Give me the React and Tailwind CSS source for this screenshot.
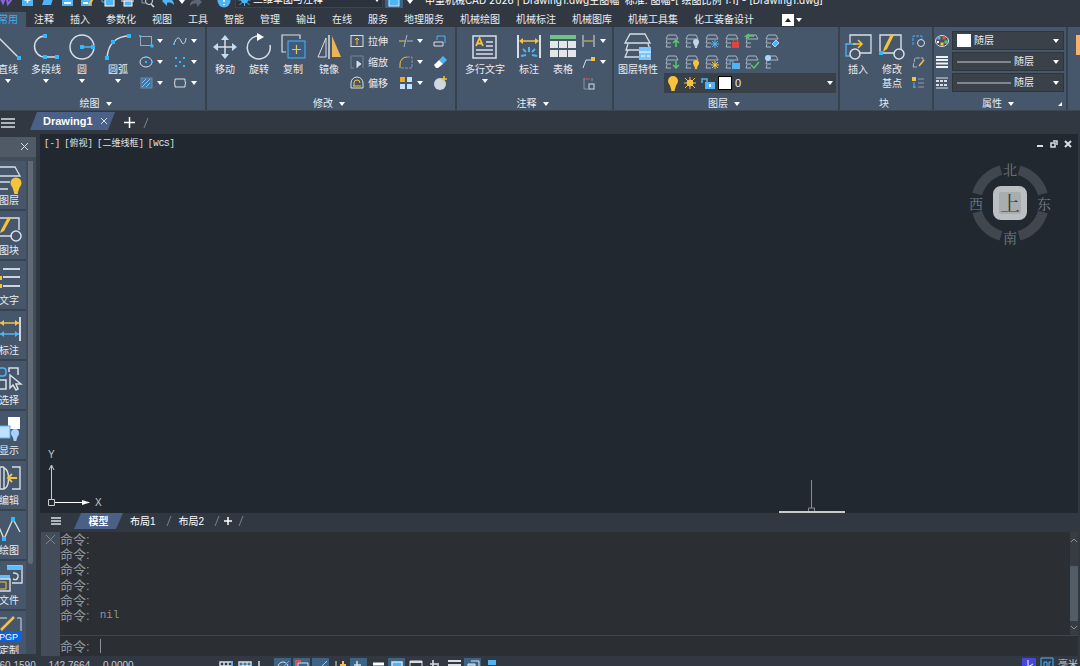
import React from "react";
import clsx from "clsx";

const W = "#d9dee6";
const B = "#4fb3f6";
const Y = "#f7c23c";

const Svg = ({ w = 28, h = w, box, children, className }) => (
  <svg
    width={w}
    height={h}
    viewBox={box || `0 0 ${w} ${h}`}
    fill="none"
    stroke={W}
    className={clsx("shrink-0", className)}
    aria-hidden="true"
  >
    {children}
  </svg>
);

const Caret = ({ className }) => (
  <Svg w={6} h={4} className={className}>
    <path d="M0 0h6L3 4z" fill="#fff" stroke="none" />
  </Svg>
);

const Dot = ({ x, y, s = 4, c = "#2fb9ff" }) => (
  <rect x={x - s / 2} y={y - s / 2} width={s} height={s} fill={c} stroke="none" />
);

const Sun = ({ x, y, r = 3, c = Y }) => (
  <g stroke={c}>
    <circle cx={x} cy={y} r={r - 1} fill={c} />
    <path
      d={`M${x} ${y - r - 2}v${2 * r + 4}M${x - r - 2} ${y}h${2 * r + 4}M${x - r - 1} ${y - r - 1}l${2 * r + 2} ${2 * r + 2}M${x + r + 1} ${y - r - 1}l${-2 * r - 2} ${2 * r + 2}`}
    />
  </g>
);

const Bulb = ({ x, y, r = 4, c = Y }) => (
  <g fill={c} stroke="none">
    <circle cx={x} cy={y} r={r} />
    <path d={`M${x - r * 0.7} ${y + r * 0.6}h${r * 1.4}l${-r * 0.3} ${r}h${-r * 0.8}z`} />
    <rect x={x - r * 0.35} y={y + r * 1.5} width={r * 0.7} height={r * 0.5} />
  </g>
);

const BigTool = ({ icon, label, width, arrow }) => (
  <button className={clsx("flex shrink-0 flex-col items-center pt-0.5", width)}>
    <Svg>{icon}</Svg>
    <span className="whitespace-pre py-0.5 text-center leading-[14px]">{label}</span>
    {arrow && <Caret />}
  </button>
);

const SmallTool = ({ icon, label, arrow }) => (
  <div className="flex h-5 items-center">
    <button className="flex items-center gap-[3px]" aria-label={label || "工具"}>
      <Svg w={16}>{icon}</Svg>
      {label && <span>{label}</span>}
    </button>
    {arrow && (
      <button className="flex w-3 justify-center" aria-label="更多">
        <Caret />
      </button>
    )}
  </div>
);

const Column = ({ tools, className }) => (
  <div className={clsx("flex shrink-0 flex-col gap-px", className)}>
    {tools.map((t, i) => (
      <SmallTool key={i} {...t} />
    ))}
  </div>
);

const Panel = ({ title, arrow = true, children, className, launcher }) => (
  <section
    className={clsx(
      "flex shrink-0 flex-col border-r-2 border-[#38424f] pt-1",
      className
    )}
  >
    <div className="flex h-[63px]">{children}</div>
    <div className="flex h-[17px] items-center pt-1">
      <span className="flex-1" />
      <button className="flex items-center gap-1.5 leading-3">
        {title}
        {arrow && <Caret />}
      </button>
      <span className="flex flex-1 justify-end pr-1">
        {launcher && (
          <Svg w={4}>
            <path d="M4 0v4H0z" fill="#fff" stroke="none" />
          </Svg>
        )}
      </span>
    </div>
  </section>
);

const icons = {
  line: (
    <>
      <path d="M3 3l22 22" strokeWidth="1.5" />
      <Dot x={25} y={25} />
    </>
  ),
  polyline: (
    <>
      <path d="M13 3A10 10 0 0 0 13 24H25" strokeWidth="1.5" />
      <Dot x={13} y={3} />
      <Dot x={13} y={24} />
      <Dot x={25} y={24} />
    </>
  ),
  circle: (
    <>
      <circle cx="14" cy="14" r="12" strokeWidth="1.5" />
      <path d="M14 14h11" stroke={B} strokeWidth="1.5" />
      <Dot x={14} y={14} />
      <Dot x={25} y={14} />
    </>
  ),
  arc: (
    <>
      <path d="M3 25C4 11 12 3 26 3" strokeWidth="1.5" />
      <Dot x={3} y={25} />
      <Dot x={9} y={9} />
      <Dot x={25} y={3} />
    </>
  ),
  move: (
    <>
      <path d="M14 5v18M5 14h18" strokeWidth="1.5" />
      <path
        d="M14 2l4 5h-8zM14 26l4-5h-8zM2 14l5-4v8zM26 14l-5-4v8z"
        fill="#c5dcf5"
        stroke="none"
      />
    </>
  ),
  rotate: (
    <>
      <path d="M13 3A11.500 11.500 0 1 0 25 12" strokeWidth="1.5" />
      <path d="M12 0l7 4-7 4z" fill="#fff" stroke="none" />
    </>
  ),
  copy: (
    <>
      <path d="M21 6V2H3v17h4" strokeWidth="1.2" />
      <rect x="9" y="8" width="17" height="17" fill="#3c5d80" stroke={B} />
      <path d="M17.500 12v9M13 16.500h9" stroke={Y} strokeWidth="1.2" />
    </>
  ),
  mirror: (
    <>
      <path d="M11 5v19H3z" />
      <path d="M14 2v24" strokeWidth="1.5" />
      <path d="M17 3v21h9z" fill="#e9b552" stroke="none" />
    </>
  ),
  mtext: (
    <>
      <rect x="2" y="3" width="23" height="22" strokeWidth="1.5" />
      <path d="M5 13L8.500 5 12 13M6.500 10.500h4" stroke={Y} strokeWidth="1.8" />
      <path d="M15 9h7M15 13h7M5 17h17M5 21h17" strokeWidth="1.4" />
    </>
  ),
  dim: (
    <>
      <path d="M3 2v23M25 2v23" strokeWidth="2" />
      <path d="M6 8h16" stroke={Y} strokeWidth="1.5" />
      <path d="M4 8l4-3v6zM24 8l-4-3v6z" fill={Y} stroke="none" />
      <path
        d="M14 14v5M8 16l3 3M20 16l-3 3M6 23l5-1M22 23l-5-1"
        stroke={B}
        strokeWidth="2"
      />
    </>
  ),
  table: (
    <>
      <rect x="1" y="2" width="26" height="4" fill="#73c283" stroke="none" />
      {[1, 10, 19].map((x) =>
        [8, 17].map((y) => (
          <rect key={x + "-" + y} x={x} y={y} width="8" height="7" fill="#e4e6e8" stroke="none" />
        ))
      )}
    </>
  ),
  layerProps: (
    <>
      <path
        d="M6 1h15l5 9H1zM4 11l-2 6h13M4 17l-3 7h14M24 11l2 5"
        strokeWidth="1.3"
      />
      <rect x="15" y="14" width="12" height="13" fill="#7cc4ff" stroke="none" />
      <path d="M15 19h12M17 23h4M23 23h3" stroke="#fff" />
    </>
  ),
  insert: (
    <>
      <path d="M6 10V2h21v18H15" strokeWidth="1.3" />
      <path d="M12 11H2v12h4" stroke={B} strokeWidth="1.3" />
      <circle cx="11" cy="21" r="5" strokeWidth="1.5" />
      <path d="M9 11h8M14 7l4 4-4 4" stroke={Y} strokeWidth="1.6" />
    </>
  ),
  editBlock: (
    <>
      <path d="M2 19V2h21v14M3 20h13" strokeWidth="1.4" />
      <path d="M6 15L13 1l3 1-7 14-4 3z" fill={Y} stroke="none" />
      <circle cx="21" cy="21" r="5" strokeWidth="1.5" />
      <Dot x={3} y={20} />
    </>
  ),
};

const drawTools = [
  {
    icon: (
      <>
        <rect x="2.500" y="3.500" width="11" height="9" stroke="#9aa8ba" />
        <Dot x={2} y={3} s={2} />
        <Dot x={14} y={13} s={3} />
      </>
    ),
    arrow: true,
  },
  {
    icon: (
      <>
        <ellipse cx="8" cy="8" rx="6" ry="5" />
        <Dot x={8} y={8} s={2} />
        <Dot x={14} y={8} s={2} />
        <Dot x={8} y={3} s={2} />
      </>
    ),
    arrow: true,
  },
  {
    icon: (
      <>
        <rect x="3" y="3" width="11" height="10" fill="#3d78aa" stroke="#6f8aa5" />
        <path d="M4 8l4-4M4 12L12 4M8 12l4-4" stroke="#86c3f2" />
      </>
    ),
    arrow: true,
  },
];

const curveTools = [
  {
    icon: (
      <>
        <path d="M2 11C5 2 8 5 9 8s4 5 5-3" />
        <Dot x={2} y={11} s={2} />
      </>
    ),
    arrow: true,
  },
  {
    icon: (
      <>
        <Dot x={4} y={4} s={2} />
        <Dot x={12} y={4} s={2} />
        <Dot x={8} y={8} s={2} />
        <Dot x={4} y={12} s={2} />
        <Dot x={12} y={12} s={2} />
      </>
    ),
    arrow: true,
  },
  {
    icon: <path d="M3 4h10v2q1 2 0 4v2H3v-2q-1-2 0-4z" />,
    arrow: true,
  },
];

const modifyTools = [
  {
    label: "拉伸",
    icon: (
      <>
        <rect x="2" y="2.500" width="12" height="11" />
        <path d="M8 12V5M6 7l2-2 2 2" stroke={Y} />
      </>
    ),
  },
  {
    label: "缩放",
    icon: (
      <>
        <path d="M2 2h12v12M2 2v12h3" stroke="#77869a" />
        <path d="M8 7l4 3-4 3zM8 13v1" fill={W} />
      </>
    ),
  },
  {
    label: "偏移",
    icon: (
      <>
        <path d="M2 13V8a6 6 0 0 1 12 0v5z" />
        <path d="M5 11V8a3 3 0 0 1 6 0M4 11h8" stroke={Y} />
      </>
    ),
  },
];

const trimTools = [
  {
    icon: (
      <>
        <path d="M6 14L9 2M9 8h6" stroke="#aab6c5" />
        <path d="M1 8h6" stroke={Y} />
      </>
    ),
    arrow: true,
  },
  {
    icon: (
      <>
        <path d="M2 14V10a7 7 0 0 1 7-7" stroke={Y} />
        <path d="M9 3h5v11H3" stroke="#8795a8" strokeDasharray="3 1" />
      </>
    ),
    arrow: true,
  },
  {
    icon: (
      <g stroke="none">
        <rect x="2" y="2" width="5" height="5" fill="#f5a623" />
        <rect x="9" y="2" width="5" height="5" fill="#bfe0ff" />
        <rect x="2" y="9" width="5" height="5" fill="#bfe0ff" />
        <rect x="9" y="9" width="5" height="5" fill="#bfe0ff" />
      </g>
    ),
    arrow: true,
  },
];

const eraseTools = [
  {
    icon: (
      <>
        <path d="M5 7V3h8v7" stroke={B} />
        <path d="M2 9h9v4H2z" />
      </>
    ),
  },
  {
    icon: (
      <g stroke="none">
        <path d="M7 6l4-4 4 4-4 4z" fill={B} />
        <path d="M2 11l5-5 4 4-5 4H4z" fill="#fff" />
      </g>
    ),
  },
  {
    icon: (
      <>
        <circle cx="8" cy="9" r="6" fill="#cfd7e2" stroke="none" />
        <path d="M12 1v6M9 4h6" stroke={Y} strokeWidth="1.5" />
      </>
    ),
  },
];

const noteTools = [
  {
    icon: (
      <>
        <path d="M2 2v12M13 2v12" />
        <path d="M3 8h9" stroke={Y} />
      </>
    ),
    arrow: true,
  },
  {
    icon: (
      <>
        <path d="M2 14l3-8h5" />
        <Dot x={12} y={5} s={4} c={Y} />
      </>
    ),
    arrow: true,
  },
  {
    icon: (
      <>
        <path d="M3 3v11h4M11 3v3" stroke="#8795a8" />
        <path d="M3 4h6" stroke="#e0524c" />
        <rect x="8" y="9" width="5" height="5" />
      </>
    ),
  },
];

const stack = (
  <path d="M2 6l2-4h8l2 4zM3 7l-1 3h5M3 11l-1 3h5" stroke="#a9b5c5" />
);

const layerTools = [
  <path d="M12 14V8M9 10l3-3 3 3" stroke="#53cf62" strokeWidth="1.5" />,
  <Bulb x={12} y={9} r={3} c="#c5d3ea" />,
  <Sun x={11} y={11} r={2} c={B} />,
  <>
    <rect x="8" y="9" width="7" height="6" fill="#e0443e" stroke="none" />
    <path d="M9.500 9V7h4v2" stroke="#e0443e" />
  </>,
  <path d="M10 3H2l3-2M2 3l3 2" stroke="#53cf62" strokeWidth="1.5" />,
  <path d="M8 11l4-4 3 3-4 4z" fill={B} stroke="#a9d6fb" />,
  <path d="M12 7v6M9 11l3 3 3-3" stroke="#53cf62" strokeWidth="1.5" />,
  <Bulb x={12} y={9} r={3} />,
  <Sun x={11} y={11} r={2} />,
  <>
    <rect x="8" y="9" width="8" height="6" fill={B} stroke="none" />
    <path d="M6 9V7h3v2" stroke={B} />
  </>,
  <path d="M7 11l3 3 5-6" stroke="#53cf62" strokeWidth="1.5" />,
  <circle cx="4" cy="4" r="3" fill="#a9d6fb" stroke="none" />,
];

const blockTools = [
  {
    icon: (
      <>
        <path d="M3 12V3h9v3" strokeDasharray="3 1" stroke={B} />
        <circle cx="11" cy="10" r="3.500" />
      </>
    ),
  },
  {
    icon: (
      <>
        <path d="M3 13l2-9h8v3M3 13h5" stroke="#aab6c5" strokeDasharray="4 1" />
        <path d="M9 12l5-6" stroke={Y} strokeWidth="1.5" />
      </>
    ),
  },
  {
    icon: (
      <>
        <Dot x={4} y={4} s={4} c={Y} />
        <path d="M8 4h6M8 8h6M8 12h6" stroke="#8d9bad" />
        <path d="M4 7v6M3 12h3" stroke={B} />
      </>
    ),
  },
];

const propIcons = [
  <>
    <ellipse cx="8" cy="8" rx="6.500" ry="5.500" fill="#4a5058" />
    <Dot x={5} y={5} s={3} c="#4fb3f6" />
    <Dot x={10} y={5} s={3} c="#e0524c" />
    <Dot x={12} y={9} s={3} c="#53cf62" />
    <Dot x={8} y={11} s={3} c={Y} />
    <Dot x={4} y={9} s={2} c="#fff" />
  </>,
  <path d="M2 3h12M2 6h12M2 9.500h12M2 13h12" stroke="#eef1f5" strokeWidth="2.2" />,
  <>
    <path d="M2 3h12M2 13h12" />
    <path d="M2 6h12M2 10h12" strokeDasharray="3 1" strokeWidth="2" />
  </>,
];

const PropSelect = ({ label, swatch }) => (
  <div className="flex h-[19px] flex-1 items-center border border-[#2f353d] bg-[#3a4149] pr-1 pl-1">
    {swatch ? (
      <span className="h-[13px] w-[14px] bg-white" />
    ) : (
      <span className="h-0.5 w-[54px] bg-[#7f868d]" />
    )}
    <select aria-label={label} className="min-w-0 flex-1 appearance-none bg-transparent pl-[3px] outline-none">
      <option>随层</option>
    </select>
    <Caret />
  </div>
);

const menuTabs = [
  "常用",
  "注释",
  "插入",
  "参数化",
  "视图",
  "工具",
  "智能",
  "管理",
  "输出",
  "在线",
  "服务",
  "地理服务",
  "机械绘图",
  "机械标注",
  "机械图库",
  "机械工具集",
  "化工装备设计",
];

const quickIcons = [
  <>
    <rect x="2" y="1" width="11" height="12" fill={B} stroke="none" />
    <path d="M7.500 4v6M4.500 7h6" stroke="#fff" strokeWidth="1.5" />
  </>,
  <path d="M6 0h9l-4 12H2z" fill={B} stroke="none" />,
  <>
    <rect x="2" y="1" width="11" height="12" fill={B} stroke="none" />
    <path d="M4 10h7" stroke="#fff" strokeWidth="2" />
  </>,
  <>
    <rect x="1" y="1" width="11" height="12" fill={B} stroke="none" />
    <path d="M3 10h5" stroke="#fff" strokeWidth="2" />
    <path d="M9 12l5-8" stroke={Y} strokeWidth="2" />
  </>,
  <>
    <path d="M2 1v8h4" stroke={B} />
    <rect x="5" y="4" width="9" height="9" fill={B} stroke="#fff" />
  </>,
  <>
    <rect x="1" y="3" width="13" height="6" fill="#8b98a8" stroke="none" />
    <rect x="4" y="8" width="8" height="5" fill={B} stroke="#fff" />
  </>,
  <>
    <path d="M2 2v8h4" stroke="#8b98a8" />
    <circle cx="9" cy="8" r="3.500" />
    <path d="M11 11l3 3" strokeWidth="1.5" />
  </>,
  <path d="M2 8l5-5v3c5 0 7 2 7 6-2-2-4-3-7-2v3z" fill={B} stroke="none" />,
];

const TitleBar = () => (
  <header className="flex h-3 shrink-0 items-end overflow-hidden pb-1 leading-4 text-white">
    <Svg w={16} className="mr-1 -ml-1">
      <path d="M3 3l4 8 3-8 2 9 4-5" stroke="#8a63e0" strokeWidth="2" />
    </Svg>
    <div className="flex gap-[5px] pl-1">
      {quickIcons.map((icon, i) => (
        <button key={i} aria-label="快速访问">
          <Svg w={15}>{icon}</Svg>
        </button>
      ))}
    </div>
    <Caret className="mx-1 mb-1" />
    <Svg w={14} className="mr-3.5">
      <path d="M13 8L8 3v3C3 6 1 8 1 12c2-2 4-3 7-2v3z" fill="#5d6773" stroke="none" />
    </Svg>
    <Svg w={14} className="mr-1">
      <circle cx="7" cy="7" r="6.500" fill={B} stroke="none" />
      <path d="M7 4v4M7 10v1" stroke="#fff" strokeWidth="1.5" />
    </Svg>
    <div className="flex h-4 w-[148px] items-center border border-[#3d4550] bg-[#2c323b] px-0.5">
      <Svg w={13} className="mr-0.5">
        <Sun x={6.5} y={6} r={4} c={B} />
      </Svg>
      <select aria-label="工作空间" className="flex-1 appearance-none bg-transparent outline-none">
        <option>二维草图与注释</option>
      </select>
      <Caret />
    </div>
    <button className="ml-0.5 bg-[#3a6485] px-0.5" aria-label="云">
      <Svg w={14}>
        <rect x="2" y="4" width="10" height="8" fill={B} stroke="#cfe8ff" />
      </Svg>
    </button>
    <Caret className="mr-3 mb-1 ml-1" />
    <h1 className="whitespace-pre font-['Inter','Noto_Sans_CJK_SC',sans-serif]">
      中望机械CAD 2026 | Drawing1.dwg主图幅  标准: 图幅-[ 绘图比例 1:1] - [Drawing1.dwg]
    </h1>
  </header>
);

const Ribbon = () => (
  <div className="flex h-21 shrink-0 overflow-hidden border-b border-[#3b4755] bg-[#46566b]">
    <Panel title="绘图" className="-ml-2.5 w-[217px]">
      <BigTool icon={icons.line} label="直线" width="w-9" arrow />
      <BigTool icon={icons.polyline} label="多段线" width="w-10" arrow />
      <BigTool icon={icons.circle} label="圆" width="w-8" arrow />
      <BigTool icon={icons.arc} label="圆弧" width="w-10" arrow />
      <Column tools={drawTools} />
      <Column tools={curveTools} className="ml-1.5" />
    </Panel>
    <Panel title="修改" className="w-[250px]">
      <BigTool icon={icons.move} label="移动" width="w-9" />
      <BigTool icon={icons.rotate} label="旋转" width="w-8" />
      <BigTool icon={icons.copy} label="复制" width="w-9" />
      <BigTool icon={icons.mirror} label="镜像" width="w-9" />
      <Column tools={modifyTools} className="ml-0.5" />
      <Column tools={trimTools} className="ml-2.5" />
      <Column tools={eraseTools} className="ml-1.5" />
    </Panel>
    <Panel title="注释" className="w-[157px]">
      <BigTool icon={icons.mtext} label="多行文字" width="w-14" arrow />
      <BigTool icon={icons.dim} label="标注" width="w-8" />
      <BigTool icon={icons.table} label="表格" width="w-9" />
      <Column tools={noteTools} />
    </Panel>
    <Panel title="图层" className="w-[226px]">
      <BigTool icon={icons.layerProps} label="图层特性" width="w-12" />
      <div className="flex flex-1 flex-col gap-px pr-0.5 pl-0.5">
        <div className="grid w-30 grid-cols-6 gap-y-px">
          {layerTools.map((icon, i) => (
            <button key={i} className="flex h-5 items-center" aria-label="图层工具">
              <Svg w={16}>
                {stack}
                {icon}
              </Svg>
            </button>
          ))}
        </div>
        <div className="flex h-5 items-center gap-1 bg-[#394047] px-[3px] text-[11px]">
          <Svg w={12} h={16}>
            <Bulb x={6} y={6} r={5} />
          </Svg>
          <Svg w={14}>
            <Sun x={7} y={7} r={4} />
          </Svg>
          <Svg w={14} h={16}>
            <rect x="4" y="7" width="10" height="7" fill={B} stroke="none" />
            <path d="M1 8V4h5v4" stroke={B} strokeWidth="1.5" />
            <path d="M9 9v3" stroke="#fff" strokeWidth="2" />
          </Svg>
          <span className="h-3 w-3 bg-white outline outline-black" />
          <select aria-label="当前图层" className="min-w-0 flex-1 appearance-none bg-transparent outline-none">
            <option>0</option>
          </select>
          <Caret />
        </div>
      </div>
    </Panel>
    <Panel title="块" arrow={false} className="w-[94px]">
      <BigTool icon={icons.insert} label="插入" width="w-9" />
      <BigTool icon={icons.editBlock} label={"修改\n基点"} width="w-8" />
      <Column tools={blockTools} className="ml-0.5" />
    </Panel>
    <Panel title="属性" className="w-[134px]" launcher>
      <div className="flex flex-1 flex-col gap-0.5 pr-0.5">
        {propIcons.map((icon, i) => (
          <div key={i} className="flex items-center gap-0.5">
            <Svg w={16}>{icon}</Svg>
            <PropSelect label={["颜色", "线宽", "线型"][i]} swatch={i === 0} />
          </div>
        ))}
      </div>
    </Panel>
    <div className="flex flex-1 overflow-hidden pt-1 pl-1.5">
      <BigTool
        icon={<rect x="0" y="2" width="20" height="20" fill="#f5b26b" stroke="none" />}
        label="粘贴"
        width="w-8"
      />
    </div>
  </div>
);

const paletteItems = [
  {
    label: "图层",
    icon: (
      <>
        <path d="M4 3h16l5 9H2M2 18h13M2 25h11" strokeWidth="1.3" />
        <Bulb x={21} y={19} r={5.5} />
      </>
    ),
  },
  {
    label: "图块",
    icon: (
      <>
        <path d="M4 22V4h20v12M4 22h13" strokeWidth="1.4" />
        <path d="M6 16l7-13 3 1-7 13-4 2z" fill={Y} stroke="none" />
        <circle cx="21" cy="22" r="5" strokeWidth="1.5" />
      </>
    ),
  },
  {
    label: "文字",
    icon: (
      <>
        <path d="M8 5h17M8 13h17M8 22h17" stroke="#fff" strokeWidth="1.5" />
        <Dot x={5} y={14} c={Y} />
        <Dot x={5} y={22} c={Y} />
      </>
    ),
  },
  {
    label: "标注",
    icon: (
      <>
        <path d="M25 3v24" stroke="#fff" strokeWidth="1.5" />
        <path d="M4 9h20" stroke={Y} strokeWidth="1.5" />
        <path d="M24 9l-4-3v6zM5 9l4-3v6z" fill={Y} stroke="none" />
        <path d="M4 20h20" stroke={B} strokeWidth="1.5" />
        <path d="M24 20l-4-3v6zM5 20l4-3v6z" fill={B} stroke="none" />
      </>
    ),
  },
  {
    label: "选择",
    icon: (
      <>
        <rect x="3" y="4" width="8" height="8" rx="3" stroke={B} strokeWidth="1.5" />
        <path d="M14 8V4h9v7M3 16h8v9H3z" strokeWidth="1.5" />
        <path d="M15 11v13l3-3 3 5 2-1-2-5h5z" strokeWidth="1.5" />
      </>
    ),
  },
  {
    label: "显示",
    icon: (
      <>
        <rect x="13" y="3" width="12" height="12" fill="#fff" stroke="none" />
        <rect x="1" y="12" width="14" height="12" fill="#bfe0ff" stroke={B} />
        <Bulb x={20} y={19} r={4} c="#a9d0fb" />
      </>
    ),
  },
  {
    label: "编辑",
    icon: (
      <>
        <path d="M9 3v22M9 3H5v22h4M9 4c6 2 6 19 0 21M17 3h8v22h-8" strokeWidth="1.4" />
        <path d="M13 14h9M17 10l-4 4 4 4" stroke={Y} strokeWidth="1.8" />
      </>
    ),
  },
  {
    label: "绘图",
    icon: (
      <>
        <path d="M2 8l7 17 9-20 7 13" strokeWidth="1.4" />
        <Dot x={9} y={25} />
        <Dot x={18} y={5} />
      </>
    ),
  },
  {
    label: "文件",
    icon: (
      <>
        <path d="M12 2h15v17H17M18 9q6 0 5 4t-5 2" strokeWidth="1.4" />
        <path d="M12 4h15M2 13h13" stroke="#5cbcff" strokeWidth="4" />
        <path d="M2 15h13v12H2" strokeWidth="1.4" />
        <path d="M2 18h9v7H2" stroke={Y} />
      </>
    ),
  },
  {
    label: "定制",
    icon: (
      <>
        <path d="M4 4h8M22 4h4v13" />
        <path d="M6 16L19 3" stroke={Y} strokeWidth="2.5" />
        <rect x="-1" y="18" width="28" height="9" fill="#0b62e0" stroke="none" />
        <text x="4" y="26" fontSize="9" fill="#fff" stroke="none">
          PGP
        </text>
      </>
    ),
  },
];

const Palette = () => (
  <aside className="flex w-9 shrink-0 flex-col pt-[3px] pb-0.5">
    <div className="flex h-5 shrink-0 items-center justify-end bg-[#4f5a66] pr-1.5">
      <button aria-label="关闭面板">
        <Svg w={10}>
          <path d="M1 1l7 7M8 1L1 8" />
        </Svg>
      </button>
    </div>
    <div className="flex min-h-0 flex-1 bg-[#414c58] pt-1">
      <div className="-ml-2 flex w-[34px] flex-col overflow-hidden">
        {paletteItems.map((item) => (
          <button
            key={item.label}
            className="flex h-[50px] shrink-0 flex-col items-center border-b-2 border-[#39434f] bg-[#46566b] pt-[3px]"
          >
            <Svg w={28} h={30}>
              {item.icon}
            </Svg>
            <span className="leading-[14px]">{item.label}</span>
          </button>
        ))}
      </div>
      <div className="flex flex-1 pl-0.5">
        <div className="h-[403px] w-[5px] rounded-b bg-[#5f6a74]" />
      </div>
    </div>
  </aside>
);

const Compass = () => (
  <div className="absolute top-7 right-[27px] grid h-[82px] w-[82px] grid-cols-3 grid-rows-3 place-items-center font-['Noto_Serif_CJK_SC','Noto_Sans_CJK_SC',serif] text-sm leading-none text-[#747c86]">
    <svg viewBox="0 0 82 82" className="col-span-3 col-start-1 row-span-3 row-start-1 h-full w-full" fill="none">
      <path
        d="M50 8.200A34 34 0 0 1 73.800 32M73.800 50A34 34 0 0 1 50 73.800M32 73.800A34 34 0 0 1 8.200 50M8.200 32A34 34 0 0 1 32 8.200"
        stroke="#40474f"
        strokeWidth="10"
      />
    </svg>
    <span className="col-start-2 row-start-1 self-start">北</span>
    <span className="col-start-1 row-start-2 justify-self-start">西</span>
    <button className="col-start-2 row-start-2 h-[34px] w-[34px] rounded-lg border-6 border-[#bcbfc1] bg-[#aaadaf] text-xl leading-none text-[#33383d]">
      上
    </button>
    <span className="col-start-3 row-start-2 justify-self-end">东</span>
    <span className="col-start-2 row-start-3 self-end">南</span>
  </div>
);

const Canvas = () => (
  <div className="relative min-h-0 flex-1 overflow-hidden bg-[#212830]">
    <div className="flex items-center justify-between pt-0.5 pr-1.5 pl-1 text-[9px] leading-4">
      <div className="flex gap-1 font-['Liberation_Mono','Noto_Sans_CJK_SC',monospace] text-[#e1e4e6]">
        <button>[-]</button>
        <button>[俯视]</button>
        <button>[二维线框]</button>
        <button>[WCS]</button>
      </div>
      <div className="flex gap-1.5">
        <button aria-label="最小化">
          <Svg w={8}>
            <path d="M1 6h6" strokeWidth="2" />
          </Svg>
        </button>
        <button aria-label="还原">
          <Svg w={8}>
            <path d="M1 3h4v4H1zM3 1h4v4" strokeWidth="1.5" />
          </Svg>
        </button>
        <button aria-label="关闭">
          <Svg w={8}>
            <path d="M1 1l6 6M7 1L1 7" strokeWidth="2" />
          </Svg>
        </button>
      </div>
    </div>
    <Compass />
    <Svg w={60} h={64} className="absolute bottom-0 left-1.5">
      <path d="M2.500 50.500h6v6h-6zM5.500 50V17M3 21l2.500-5 2.500 5" stroke="#c7cacd" />
      <path d="M9 53.500h34" stroke="#fff" />
      <path d="M36 51l8 2.500-8 2.500z" fill="#fff" stroke="none" />
      <text x="2" y="9" fontSize="10" fill="#c7cacd" stroke="none">
        Y
      </text>
      <text x="49" y="57" fontSize="10" fill="#c7cacd" stroke="none">
        X
      </text>
    </Svg>
    <Svg w={66} h={34} className="absolute right-[233px] bottom-0">
      <path d="M32.500 1v28M29.500 34v-5h6v5" stroke="#888d92" />
      <path d="M0 33h66" stroke="#c9ccc6" strokeWidth="2" />
    </Svg>
  </div>
);

const Slash = ({ className }) => (
  <Svg w={6} h={12} className={className}>
    <path d="M5 1L1 11" stroke="#7b838e" />
  </Svg>
);

const LayoutTabs = () => (
  <nav className="flex h-[19px] shrink-0 items-center pb-[3px] text-white">
    <button className="mr-3 ml-2.5" aria-label="布局列表">
      <Svg w={12} h={10}>
        <path d="M1 2h10M1 5h10M1 8h10" strokeWidth="1.5" />
      </Svg>
    </button>
    <button className="h-4 w-[49px] bg-[#4a6086] font-bold [clip-path:polygon(7px_0,100%_0,42px_100%,0_100%)]">
      模型
    </button>
    <button className="ml-[7px]">布局1</button>
    <Slash className="ml-2.5" />
    <button className="ml-[7px]">布局2</button>
    <Slash className="ml-2.5" />
    <button className="mx-1" aria-label="新建布局">
      <Svg w={8}>
        <path d="M4 0v8M0 4h8" stroke="#fff" strokeWidth="1.5" />
      </Svg>
    </button>
    <Slash className="ml-0.5" />
  </nav>
);

const history = ["", "", "", "", "", "nil"];

const CommandPanel = () => (
  <div className="mr-0.5 ml-px flex h-[124px] shrink-0 bg-[#2b2e32] text-[13px] text-[#8f969e]">
    <div className="w-[19px] shrink-0 bg-[#454c59] pt-0.5 pl-1">
      <button className="block" aria-label="关闭命令行">
        <Svg w={11}>
          <path d="M1 1l9 9M10 1l-9 9" stroke="#7d8591" />
        </Svg>
      </button>
    </div>
    <div className="flex flex-1 flex-col">
      <div className="flex h-[103px]">
        <div className="flex flex-1 flex-col justify-between pb-3 leading-[15px]">
          {history.map((line, i) => (
            <p key={i} className="flex gap-2.5">
              <span>命令:</span>
              <span className="font-['Liberation_Mono',monospace] text-[11px]">{line}</span>
            </p>
          ))}
        </div>
        <div className="flex w-2 flex-col items-center justify-between bg-[#383c42]">
          <Svg w={8} h={14}>
            <path d="M1 10l3-3 3 3" stroke="#8b939c" />
          </Svg>
          <span className="mt-auto h-[55px] w-full bg-[#525c67]" />
          <Svg w={8} h={14}>
            <path d="M1 5l3 3 3-3" stroke="#8b939c" />
          </Svg>
        </div>
      </div>
      <div className="flex flex-1 items-center border-t border-[#41454a] leading-[15px]">
        <label htmlFor="command">命令:</label>
        <input
          id="command"
          className="ml-2.5 h-3.5 flex-1 border-l border-[#8b9097] bg-transparent pl-1 outline-none"
        />
      </div>
    </div>
  </div>
);

const grid = <path d="M1 2h12v12H1zM5 2v12M9 2v12M1 6h12" strokeWidth="1.5" />;

const statusIcons = [
  { icon: <g>{grid}<path d="M13 1v12" stroke={B} strokeWidth="2" /></g> },
  { icon: <g>{grid}<path d="M1 4h12" stroke={B} /></g> },
  { icon: <path d="M2 1v12" strokeWidth="1.5" /> },
  { on: true, icon: <><circle cx="7" cy="7" r="5" /><path d="M7 7l6-6" stroke={B} /></> },
  { on: true, icon: <><path d="M3 3h10v10H3z" /><path d="M1 6V1h5" stroke="#e0524c" strokeWidth="2" /></> },
  { on: true, icon: <path d="M2 6l3 3 8-8" stroke="#9bd0f7" /> },
  { icon: <><path d="M3 1v12" /><path d="M10 1v12M7 5h6" stroke={Y} strokeWidth="2" /></> },
  { on: true, icon: <path d="M5 1v10M2 5h7" strokeWidth="1.5" /> },
  { icon: <path d="M2 4h11" stroke="#fff" strokeWidth="3" /> },
  { on: true, icon: <path d="M2 2h10v8H2z" fill={B} strokeWidth="1.5" /> },
  { icon: <><path d="M1 1h12v12H1z" /><path d="M1 2h12" strokeWidth="2" /></> },
  { icon: <path d="M5 0v8M2 4h7M10 3v8" strokeWidth="1.5" /> },
  { icon: <path d="M1 1h13M1 5h13" strokeWidth="2" /> },
  { on: true, icon: <><path d="M5 1h8v8" /><path d="M2 4h7v7H2z" fill="#9ab8d2" /></> },
  { icon: <path d="M3 0h8v5H3z" fill={B} stroke="none" /> },
];

const StatusBar = () => (
  <footer className="flex h-2.5 shrink-0 items-start overflow-hidden text-[#c5cad1]">
    <div className="flex w-[217px] shrink-0 gap-2.5 pt-1 leading-3">
      <span className="-ml-1.5">360.1590,</span>
      <span>142.7664,</span>
      <span>0.0000</span>
    </div>
    <div className="flex flex-1 gap-0.5 pt-0.5">
      {statusIcons.map(({ icon, on }, i) => (
        <button
          key={i}
          aria-label="状态开关"
          className={clsx("flex w-[17px] justify-center pt-0.5", on && "bg-[#3d6485]")}
        >
          <Svg w={14}>{icon}</Svg>
        </button>
      ))}
    </div>
    <div className="flex shrink-0 items-start gap-1 pr-0.5">
      <Svg w={14}>
        <rect width="14" height="14" y="2" fill="#4747dc" stroke="none" />
        <path d="M6 4v7l5-3" stroke="#fff" />
      </Svg>
      <Svg w={14}>
        <path d="M1 2h12v12H1zM4 14V6h3v8M9 14V6h2" stroke={B} />
      </Svg>
      <button className="pt-0.5 leading-[14px]">毫米</button>
    </div>
  </footer>
);

const App = () => {
  return (
    <div className="flex h-screen flex-col overflow-hidden bg-[#323842] font-['Liberation_Sans','Noto_Sans_CJK_SC',sans-serif] text-[10px] text-[#e9ecf0]">
      <TitleBar />
      <nav className="-ml-2.5 flex h-[15px] shrink-0 items-center">
        {menuTabs.map((tab, i) => (
          <button
            key={tab}
            className={clsx(
              "h-full shrink-0 px-2 leading-[15px]",
              i === 0 && "bg-[#46566b] text-[#35b4f0]"
            )}
          >
            {tab}
          </button>
        ))}
        <button className="ml-5 flex h-3 w-3 items-center justify-center bg-white" aria-label="折叠功能区">
          <Svg w={6} h={4}>
            <path d="M3 0l3 4H0z" fill="#222" stroke="none" />
          </Svg>
        </button>
        <Caret className="ml-0.5" />
      </nav>
      <Ribbon />
      <div className="flex h-[23px] shrink-0 items-center">
        <button className="w-[30px] shrink-0" aria-label="文档列表">
          <Svg w={16} h={12}>
            <path d="M1 2h14M1 6h14M1 10h14" strokeWidth="1.5" />
          </Svg>
        </button>
        <div className="mb-1 flex h-[18px] w-[85px] items-center gap-[7px] self-end bg-[#4a6086] pl-[13px] text-[11px] font-bold text-white [clip-path:polygon(7px_0,100%_0,78px_100%,0_100%)]">
          <button>Drawing1</button>
          <button aria-label="关闭文档">
            <Svg w={8}>
              <path d="M1 1l6 6M7 1L1 7" />
            </Svg>
          </button>
        </div>
        <button className="mr-2 ml-[9px]" aria-label="新建文档">
          <Svg w={11}>
            <path d="M5.500 0v11M0 5.500h11" stroke="#fff" strokeWidth="1.5" />
          </Svg>
        </button>
        <Slash />
      </div>
      <div className="flex min-h-0 flex-1">
        <Palette />
        <main className="ml-1 flex min-w-0 flex-1 flex-col">
          <div className="mr-0.5 flex min-h-0 flex-1 flex-col">
            <Canvas />
          </div>
          <LayoutTabs />
          <CommandPanel />
        </main>
      </div>
      <StatusBar />
    </div>
  );
};

export default App;
